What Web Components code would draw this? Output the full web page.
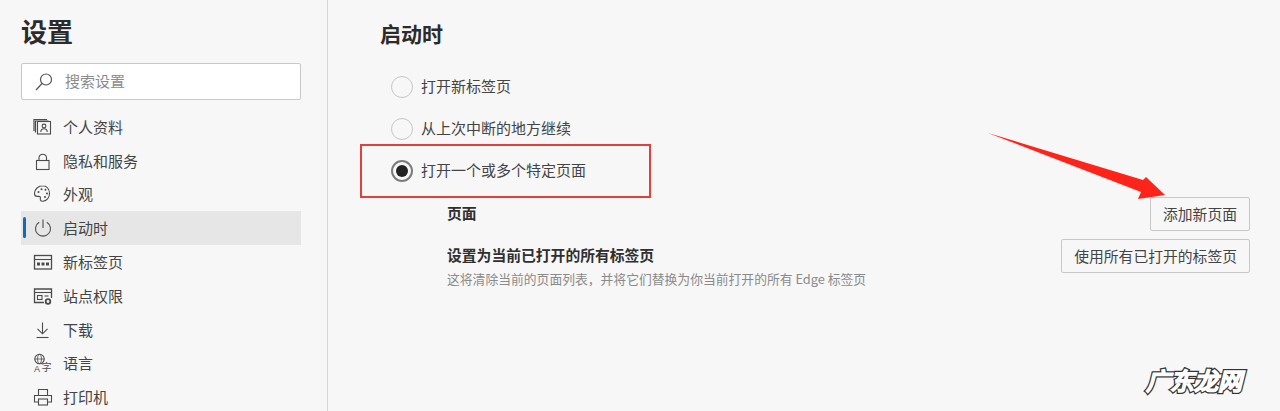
<!DOCTYPE html>
<html lang="zh-CN">
<head>
<meta charset="utf-8">
<title>设置</title>
<style>
  html, body {
    margin: 0;
    height: 100%;
    overflow: hidden;
    background: #f7f7f7;
  }
  body {
    font-family: "Noto Sans CJK SC", "Noto Sans", sans-serif;
    color: #3b3b3b;
  }
</style>
</head>
<body>
<settings-app>
  <settings-sidebar slot="sidebar" heading="设置">
    <search-box placeholder="搜索设置"></search-box>
    <nav-item icon="profile">个人资料</nav-item>
    <nav-item icon="lock">隐私和服务</nav-item>
    <nav-item icon="palette">外观</nav-item>
    <nav-item icon="power" selected>启动时</nav-item>
    <nav-item icon="newtab">新标签页</nav-item>
    <nav-item icon="site">站点权限</nav-item>
    <nav-item icon="download">下载</nav-item>
    <nav-item icon="language">语言</nav-item>
    <nav-item icon="printer">打印机</nav-item>
  </settings-sidebar>
  <startup-panel heading="启动时">
    <radio-option>打开新标签页</radio-option>
    <radio-option>从上次中断的地方继续</radio-option>
    <radio-option checked>打开一个或多个特定页面</radio-option>
    <setting-row label="页面" action="添加新页面"></setting-row>
    <setting-row label="设置为当前已打开的所有标签页" action="使用所有已打开的标签页">这将清除当前的页面列表，并将它们替换为你当前打开的所有 Edge 标签页</setting-row>
  </startup-panel>
  <shot-annotations></shot-annotations>
</settings-app>

<script>
const ICONS = {
  profile: `<path d="M1 14V2.500h13" stroke-width="1.200"/><path d="M2.500 15.500V4h13" stroke-width="1.200"/><rect x="4.500" y="4.500" width="13" height="12.500"/><circle cx="11" cy="9" r="1.900"/><path d="M7.800 15c0-2 1.300-3.200 3.200-3.200s3.200 1.200 3.200 3.200"/>`,
  lock: `<rect x="3.500" y="9.500" width="12.500" height="9"/><path d="M6 9.500V6.500a3.800 3.800 0 0 1 7.500 0v3"/>`,
  palette: `<path d="M10 1.800c-4.700 0-8.500 3.300-8.500 7.600 0 1.800 1 3 2.600 3 1.300 0 2.500-.3 3.100.5.700.9-.3 1.900.2 3 .4.900 1.400 1.500 2.600 1.300 4-.6 6.500-3.900 6.500-7.700 0-4.400-2.700-7.700-6.500-7.700z"/><g fill="currentColor" stroke="none"><circle cx="5.500" cy="8" r="1"/><circle cx="8.500" cy="5.200" r="1"/><circle cx="12.500" cy="5.800" r="1"/><circle cx="14" cy="9.500" r="1"/><circle cx="12" cy="13" r="1"/></g>`,
  power: `<path d="M6.200 4.200a7.500 7.500 0 1 0 7.600 0"/><path d="M10 1.500v8.500"/>`,
  newtab: `<rect x="1.500" y="3.500" width="17" height="13.500" stroke-width="1.300"/><path d="M1.500 7.500h17"/><g fill="currentColor" stroke="none"><rect x="4" y="10.500" width="3" height="3"/><rect x="8.500" y="10.500" width="3" height="3"/><rect x="13" y="10.500" width="3" height="3"/></g>`,
  site: `<path d="M11 16.500H1.500V3h17v9" stroke-width="1.300"/><path d="M1.500 6.500h17"/><rect x="4.500" y="9.500" width="4.500" height="4"/><path d="M11.500 10h4"/><circle cx="15" cy="15.500" r="2.300" stroke-width="1.800"/>`,
  download: `<path d="M9.500 2.500v11"/><path d="M4.500 8.800l5 5 5-5"/><path d="M3.500 17.500h12"/>`,
  language: `<circle cx="6.500" cy="6" r="4.700"/><ellipse cx="6.500" cy="6" rx="2" ry="4.700" stroke-width=".8"/><path d="M1.800 6h9.400" stroke-width=".8"/><text x="1" y="18.500" font-size="9" font-family="Liberation Sans" fill="currentColor" stroke="none">A</text><text x="8.500" y="18" font-size="10" font-family="Noto Sans CJK SC" fill="currentColor" stroke="none">字</text>`,
  printer: `<path d="M5.500 8.500V2.500h9v6"/><path d="M5 15H1.500V8.500h17V15H15"/><rect x="5.500" y="12" width="9" height="6"/>`
};

class SettingsApp extends HTMLElement {
  constructor() {
    super();
    this.attachShadow({ mode: "open" }).innerHTML = `
      <style>
        :host {
          display: grid;
          grid-template-columns: 328px 1fr;
          position: relative;
          height: 411px;
          overflow: hidden;
        }
      </style>
      <slot name="sidebar"></slot>
      <slot></slot>
    `;
  }
}

class SettingsSidebar extends HTMLElement {
  constructor() {
    super();
    this.attachShadow({ mode: "open" }).innerHTML = `
      <style>
        :host {
          display: block;
          box-sizing: border-box;
          height: 411px;
          padding: 14px 26px 0 21px;
          border-right: 1px solid #d6d6d6;
          overflow: hidden;
        }
        h1 {
          margin: 0 0 15px;
          font-size: 26px;
          line-height: 34px;
          font-weight: 700;
          color: #2b2b2b;
        }
      </style>
      <h1></h1>
      <slot></slot>
    `;
    this.shadowRoot.querySelector("h1").textContent = this.getAttribute("heading");
  }
}

class SearchBox extends HTMLElement {
  constructor() {
    super();
    this.attachShadow({ mode: "open" }).innerHTML = `
      <style>
        :host {
          display: flex;
          align-items: center;
          gap: 12px;
          box-sizing: border-box;
          height: 37px;
          margin-bottom: 10px;
          padding-left: 13px;
          background: #fff;
          border: 1px solid #c8c8c8;
          border-radius: 2px;
          font-size: 15px;
          color: #8c8c8c;
        }
        svg { display: block; color: #555; }
        span { padding-bottom: 3px; }
      </style>
      <svg width="18" height="18" viewBox="0 0 18 18" fill="none" stroke="currentColor" stroke-width="1.200">
        <circle cx="11" cy="6.500" r="5.500"/>
        <path d="M7 10.500L1 17"/>
      </svg>
      <span></span>
    `;
    this.shadowRoot.querySelector("span").textContent = this.getAttribute("placeholder");
  }
}

class NavItem extends HTMLElement {
  constructor() {
    super();
    this.attachShadow({ mode: "open" }).innerHTML = `
      <style>
        :host {
          display: flex;
          align-items: center;
          gap: 10px;
          position: relative;
          box-sizing: border-box;
          height: 33.800px;
          padding-left: 12px;
          font-size: 15px;
          color: #444;
        }
        :host([selected]) { background: #e6e6e6; }
        :host([selected])::before {
          content: "";
          position: absolute;
          left: 2px;
          top: 6px;
          width: 3px;
          height: 21px;
          border-radius: 2px;
          background: #0f6cbd;
        }
        svg { display: block; flex: none; color: #4c4c4c; }
        span { padding-bottom: 1px; }
      </style>
      <svg width="20" height="20" viewBox="0 0 20 20" fill="none" stroke="currentColor" stroke-width="1.100"></svg>
      <span><slot></slot></span>
    `;
    this.shadowRoot.querySelector("svg").innerHTML = ICONS[this.getAttribute("icon")];
  }
}

class StartupPanel extends HTMLElement {
  constructor() {
    super();
    this.attachShadow({ mode: "open" }).innerHTML = `
      <style>
        :host {
          display: block;
          padding: 18px 30px 0 52px;
        }
        h2 {
          margin: 0 0 18px;
          font-size: 21px;
          line-height: 30px;
          font-weight: 700;
          color: #2b2b2b;
        }
        .list {
          display: flex;
          flex-direction: column;
        }
      </style>
      <h2></h2>
      <div class="list"><slot></slot></div>
    `;
    this.shadowRoot.querySelector("h2").textContent = this.getAttribute("heading");
  }
}

class RadioOption extends HTMLElement {
  constructor() {
    super();
    this.attachShadow({ mode: "open" }).innerHTML = `
      <style>
        :host {
          display: flex;
          align-items: center;
          gap: 8px;
          height: 42px;
          padding-left: 11px;
          font-size: 15px;
          color: #444;
        }
        .dot {
          display: grid;
          place-items: center;
          box-sizing: border-box;
          width: 22px;
          height: 22px;
          border: 1.500px solid #c6c6c6;
          border-radius: 50%;
        }
        :host([checked]) .dot {
          border: 2px solid #7c7c7c;
        }
        :host([checked]) .dot::after {
          content: "";
          width: 12px;
          height: 12px;
          border-radius: 50%;
          background: #222;
        }
        .text { padding-bottom: 3px; }
      </style>
      <span class="dot"></span>
      <span class="text"><slot></slot></span>
    `;
  }
}

class SettingRow extends HTMLElement {
  constructor() {
    super();
    this.attachShadow({ mode: "open" }).innerHTML = `
      <style>
        :host {
          display: flex;
          justify-content: space-between;
          align-items: flex-start;
          margin-bottom: 8px;
          padding-left: 67px;
        }
        :host(:first-of-type) { margin-top: 5px; }
        .label {
          padding-top: 6px;
          font-size: 14.800px;
          line-height: 20px;
          font-weight: 700;
          color: #2f2f2f;
        }
        .note {
          margin-top: 5px;
          font-size: 12.800px;
          line-height: 18px;
          color: #8a8a8a;
        }
        button {
          box-sizing: border-box;
          height: 34px;
          padding: 0 12px 2px;
          background: #f7f7f7;
          border: 1px solid #c8c8c8;
          border-radius: 2px;
          font: inherit;
          font-size: 14.800px;
          color: #444;
        }
      </style>
      <div>
        <div class="label"></div>
        <div class="note"><slot></slot></div>
      </div>
      <button type="button"></button>
    `;
    this.shadowRoot.querySelector(".label").textContent = this.getAttribute("label");
    this.shadowRoot.querySelector("button").textContent = this.getAttribute("action");
  }
}

// red box, arrow and watermark were painted over the screenshot
class ShotAnnotations extends HTMLElement {
  constructor() {
    super();
    this.attachShadow({ mode: "open" }).innerHTML = `
      <style>
        :host {
          position: absolute;
          inset: 0;
          pointer-events: none;
        }
        .box {
          position: absolute;
          left: 360px;
          top: 144px;
          width: 287px;
          height: 50px;
          border: 2px solid #e2403c;
        }
        svg {
          position: absolute;
          left: 0;
          top: 0;
        }
        .mark {
          position: absolute;
          left: 1146px;
          top: 364px;
          isolation: isolate;
          font: italic 400 24px/32px "Noto Sans CJK SC", sans-serif;
          color: #fff;
          -webkit-text-stroke: 2px #fff;
        }
        .mark::before {
          content: attr(data-text);
          position: absolute;
          left: 0;
          top: 0;
          z-index: -1;
          color: #333;
          -webkit-text-stroke: 4.500px #333;
        }
      </style>
      <div class="box"></div>
      <svg width="1280" height="411">
        <polygon fill="#ff2419" points="988,133 1143,180 1146,177 1165,195 1138,199 1141,192"/>
      </svg>
      <div class="mark" data-text="广东龙网">广东龙网</div>
    `;
  }
}

customElements.define("settings-app", SettingsApp);
customElements.define("settings-sidebar", SettingsSidebar);
customElements.define("search-box", SearchBox);
customElements.define("nav-item", NavItem);
customElements.define("startup-panel", StartupPanel);
customElements.define("radio-option", RadioOption);
customElements.define("setting-row", SettingRow);
customElements.define("shot-annotations", ShotAnnotations);
</script>
</body>
</html>
